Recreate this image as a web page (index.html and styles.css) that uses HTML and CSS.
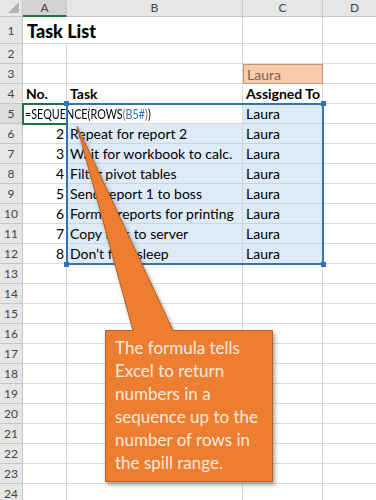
FILE: index.html
```html
<!DOCTYPE html>
<html lang="en">
<head>
    <meta charset="UTF-8">
    <meta name="viewport" content="width=device-width, initial-scale=1.0">
    <title>Task List</title>
    <link rel="stylesheet" href="styles.css">
</head>
<body>
    <div class="sheet">
        <!-- column headers -->
        <div class="row head">
            <div class="corner"><span class="tri"></span></div>
            <div class="colhead ca sel">A</div>
            <div class="colhead cb">B</div>
            <div class="colhead cc">C</div>
            <div class="colhead cd">D</div>
        </div>

        <div class="row tall">
            <div class="rowhead">1</div>
            <div class="cell ca spill title">Task List</div>
            <div class="cell cb"></div>
            <div class="cell cc"></div>
            <div class="cell cd"></div>
        </div>
        <div class="row">
            <div class="rowhead">2</div>
            <div class="cell ca"></div>
            <div class="cell cb"></div>
            <div class="cell cc"></div>
            <div class="cell cd"></div>
        </div>
        <div class="row">
            <div class="rowhead">3</div>
            <div class="cell ca"></div>
            <div class="cell cb"></div>
            <div class="cell cc who">Laura</div>
            <div class="cell cd"></div>
        </div>
        <div class="row">
            <div class="rowhead">4</div>
            <div class="cell ca bold">No.</div>
            <div class="cell cb bold">Task</div>
            <div class="cell cc bold">Assigned To</div>
            <div class="cell cd"></div>
        </div>
        <div class="row">
            <div class="rowhead selrow">5</div>
            <div class="cell ca spill formula"><span class="ftext">=SEQUENCE(ROWS<span class="paren">(</span><span class="ref">B5#</span><span class="paren">)</span>)</span></div>
            <div class="cell cb"></div>
            <div class="cell cc hl">Laura</div>
            <div class="cell cd"></div>
        </div>
        <div class="row">
            <div class="rowhead">6</div>
            <div class="cell ca num">2</div>
            <div class="cell cb hl">Repeat for report 2</div>
            <div class="cell cc hl">Laura</div>
            <div class="cell cd"></div>
        </div>
        <div class="row">
            <div class="rowhead">7</div>
            <div class="cell ca num">3</div>
            <div class="cell cb hl">Wait for workbook to calc.</div>
            <div class="cell cc hl">Laura</div>
            <div class="cell cd"></div>
        </div>
        <div class="row">
            <div class="rowhead">8</div>
            <div class="cell ca num">4</div>
            <div class="cell cb hl">Filter pivot tables</div>
            <div class="cell cc hl">Laura</div>
            <div class="cell cd"></div>
        </div>
        <div class="row">
            <div class="rowhead">9</div>
            <div class="cell ca num">5</div>
            <div class="cell cb hl">Send report 1 to boss</div>
            <div class="cell cc hl">Laura</div>
            <div class="cell cd"></div>
        </div>
        <div class="row">
            <div class="rowhead">10</div>
            <div class="cell ca num">6</div>
            <div class="cell cb hl">Format reports for printing</div>
            <div class="cell cc hl">Laura</div>
            <div class="cell cd"></div>
        </div>
        <div class="row">
            <div class="rowhead">11</div>
            <div class="cell ca num">7</div>
            <div class="cell cb hl">Copy files to server</div>
            <div class="cell cc hl">Laura</div>
            <div class="cell cd"></div>
        </div>
        <div class="row">
            <div class="rowhead">12</div>
            <div class="cell ca num">8</div>
            <div class="cell cb hl">Don’t fall asleep</div>
            <div class="cell cc hl">Laura</div>
            <div class="cell cd"></div>
        </div>
        <div class="row"><div class="rowhead">13</div><div class="cell ca"></div><div class="cell cb"></div><div class="cell cc"></div><div class="cell cd"></div></div>
        <div class="row"><div class="rowhead">14</div><div class="cell ca"></div><div class="cell cb"></div><div class="cell cc"></div><div class="cell cd"></div></div>
        <div class="row"><div class="rowhead">15</div><div class="cell ca"></div><div class="cell cb"></div><div class="cell cc"></div><div class="cell cd"></div></div>
        <div class="row"><div class="rowhead">16</div><div class="cell ca"></div><div class="cell cb"></div><div class="cell cc"></div><div class="cell cd"></div></div>
        <div class="row"><div class="rowhead">17</div><div class="cell ca"></div><div class="cell cb"></div><div class="cell cc"></div><div class="cell cd"></div></div>
        <div class="row"><div class="rowhead">18</div><div class="cell ca"></div><div class="cell cb"></div><div class="cell cc"></div><div class="cell cd"></div></div>
        <div class="row"><div class="rowhead">19</div><div class="cell ca"></div><div class="cell cb"></div><div class="cell cc"></div><div class="cell cd"></div></div>
        <div class="row"><div class="rowhead">20</div><div class="cell ca"></div><div class="cell cb"></div><div class="cell cc"></div><div class="cell cd"></div></div>
        <div class="row"><div class="rowhead">21</div><div class="cell ca"></div><div class="cell cb"></div><div class="cell cc"></div><div class="cell cd"></div></div>
        <div class="row"><div class="rowhead">22</div><div class="cell ca"></div><div class="cell cb"></div><div class="cell cc"></div><div class="cell cd"></div></div>
        <div class="row"><div class="rowhead">23</div><div class="cell ca"></div><div class="cell cb"></div><div class="cell cc"></div><div class="cell cd"></div></div>
        <div class="row"><div class="rowhead">24</div><div class="cell ca"></div><div class="cell cb"></div><div class="cell cc"></div><div class="cell cd"></div></div>

        <!-- selection + reference range -->
        <div class="active"></div>
        <div class="range"></div>
        <span class="handle tl"></span>
        <span class="handle tr"></span>
        <span class="handle bl"></span>
        <span class="handle br"></span>

        <!-- callout -->
        <svg class="callout-shape" width="376" height="500" viewBox="0 0 376 500">
            <path d="M105.5 330.5 H133 L77 126 L173 330.5 H272.5 V481.5 H105.5 Z" fill="#ed7d31" stroke="#b5601f" stroke-width="1"/>
        </svg>
        <div class="callout-text">The formula tells Excel to return numbers in a sequence up to the number of rows in the spill range.</div>
    </div>
</body>
</html>
```

FILE: styles.css
```css
body {
    margin: 0;
    background: #fff;
    font-family: Lato, "Open Sans", sans-serif;
}
.sheet {
    position: relative;
    width: 376px;
    height: 500px;
    overflow: hidden;
}
.row {
    display: flex;
    height: 20px;
}
.row.head {
    height: 17px;
}
.row.tall {
    height: 27px;
}
.corner, .colhead, .rowhead, .cell {
    flex: none;
    box-sizing: border-box;
    border-right: 1px solid #dadada;
    border-bottom: 1px solid #dadada;
}
.corner {
    position: relative;
    width: 23px;
    background: #e6e6e6;
    border-color: #c6c6c6;
}
.tri {
    position: absolute;
    right: 3px;
    bottom: 3px;
    width: 0;
    height: 0;
    border-left: 11px solid transparent;
    border-bottom: 11px solid #b4b4b4;
}
.colhead {
    background: #e6e6e6;
    border-color: #c6c6c6;
    color: #444;
    font-size: 12px;
    line-height: 16px;
    text-align: center;
}
.colhead.sel {
    background: #d2d2d2;
    border-bottom: 2px solid #217346;
}
.rowhead {
    width: 23px;
    background: #e6e6e6;
    border-color: #c6c6c6;
    color: #444;
    font-size: 12px;
    display: flex;
    align-items: center;
    justify-content: center;
}
.rowhead.selrow {
    background: #dcdcdc;
}
.ca { width: 44px; }
.cb { width: 176px; }
.cc { width: 80px; }
.cd { width: 64px; }
.cell {
    padding: 0 3px;
    font-size: 14px;
    line-height: 20px;
    white-space: nowrap;
    color: #000;
}
.cell.spill {
    border-right-color: transparent;
    overflow: visible;
}
.title {
    font-size: 18px;
    font-weight: 900;
    line-height: 28px;
    padding-left: 4px;
}
.bold {
    font-weight: bold;
}
.num {
    text-align: right;
    padding-right: 2px;
}
.hl {
    background: #deebf7;
    border-color: #c8d6e4;
}
.who {
    background: #f8cbad;
    border: 1px solid #c29474;
    color: #7e6252;
}
.formula {
    padding-left: 2px;
}
.ftext {
    display: inline-block;
    transform: scaleX(0.77);
    transform-origin: left center;
}
.formula .paren {
    color: #c0504d;
}
.formula .ref {
    color: #2e75b6;
}
.active {
    position: absolute;
    left: 22px;
    top: 103px;
    width: 46px;
    height: 22px;
    box-sizing: border-box;
    border: 2px solid #217346;
}
.range {
    position: absolute;
    left: 66px;
    top: 103px;
    width: 258px;
    height: 162px;
    box-sizing: border-box;
    border: 2px solid #2e75b6;
}
.handle {
    position: absolute;
    width: 5px;
    height: 5px;
    background: #2e75b6;
}
.handle.tl { left: 64px; top: 101px; }
.handle.tr { left: 321px; top: 101px; }
.handle.bl { left: 64px; top: 262px; }
.handle.br { left: 321px; top: 262px; }
.callout-shape {
    position: absolute;
    left: 0;
    top: 0;
    filter: drop-shadow(2px 3px 2px rgba(0,0,0,0.35));
}
.callout-text {
    position: absolute;
    left: 105px;
    top: 330px;
    width: 167px;
    box-sizing: border-box;
    padding: 6px 6px 0 10px;
    font-size: 17px;
    line-height: 23px;
    color: #fbe9dc;
}
```
